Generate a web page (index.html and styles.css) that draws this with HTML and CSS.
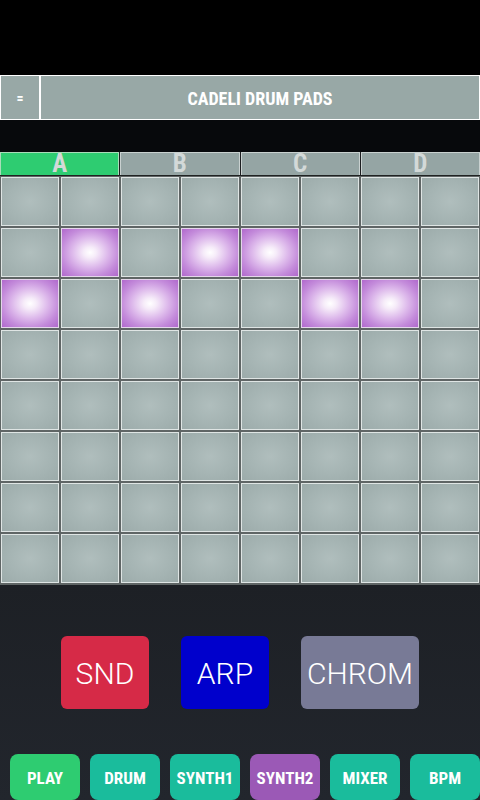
FILE: index.html
```html
<!DOCTYPE html>
<html>
<head>
<meta charset="utf-8">
<link rel="stylesheet" href="styles.css">
</head>
<body>
<div class="app">
  <div class="status"></div>
  <div class="header">
    <div class="menu">=</div>
    <div class="title">CADELI DRUM PADS</div>
  </div>
  <div class="spacer"></div>
  <div class="tabs">
    <div class="tab active">A</div>
    <div class="tab">B</div>
    <div class="tab">C</div>
    <div class="tab">D</div>
  </div>
  <div class="grid">
    <div class="pad"></div><div class="pad"></div><div class="pad"></div><div class="pad"></div><div class="pad"></div><div class="pad"></div><div class="pad"></div><div class="pad"></div>
    <div class="pad"></div><div class="pad on"></div><div class="pad"></div><div class="pad on"></div><div class="pad on"></div><div class="pad"></div><div class="pad"></div><div class="pad"></div>
    <div class="pad on"></div><div class="pad"></div><div class="pad on"></div><div class="pad"></div><div class="pad"></div><div class="pad on"></div><div class="pad on"></div><div class="pad"></div>
    <div class="pad"></div><div class="pad"></div><div class="pad"></div><div class="pad"></div><div class="pad"></div><div class="pad"></div><div class="pad"></div><div class="pad"></div>
    <div class="pad"></div><div class="pad"></div><div class="pad"></div><div class="pad"></div><div class="pad"></div><div class="pad"></div><div class="pad"></div><div class="pad"></div>
    <div class="pad"></div><div class="pad"></div><div class="pad"></div><div class="pad"></div><div class="pad"></div><div class="pad"></div><div class="pad"></div><div class="pad"></div>
    <div class="pad"></div><div class="pad"></div><div class="pad"></div><div class="pad"></div><div class="pad"></div><div class="pad"></div><div class="pad"></div><div class="pad"></div>
    <div class="pad"></div><div class="pad"></div><div class="pad"></div><div class="pad"></div><div class="pad"></div><div class="pad"></div><div class="pad"></div><div class="pad"></div>
  </div>
  <div class="lower">
    <div class="modes">
      <div class="mode snd">SND</div>
      <div class="mode arp">ARP</div>
      <div class="mode chrom">CHROM</div>
    </div>
    <div class="nav">
      <div class="nbtn play">PLAY</div>
      <div class="nbtn teal">DRUM</div>
      <div class="nbtn teal">SYNTH1</div>
      <div class="nbtn purple">SYNTH2</div>
      <div class="nbtn teal">MIXER</div>
      <div class="nbtn teal">BPM</div>
    </div>
  </div>
</div>
</body>
</html>
```

FILE: styles.css
```css
html, body {
  margin: 0;
  padding: 0;
  width: 480px;
  height: 800px;
  overflow: hidden;
  background: #000;
}
.app {
  width: 480px;
  height: 800px;
  display: flex;
  flex-direction: column;
  font-family: "Roboto Condensed", Roboto, "Liberation Sans", sans-serif;
}
.status {
  height: 75px;
  background: #000;
  flex: none;
}
.header {
  height: 45px;
  flex: none;
  display: flex;
  background: #98a8a6;
}
.menu {
  width: 38px;
  border: 1px solid #fff;
  display: flex;
  align-items: center;
  justify-content: center;
  color: #fff;
  font-weight: 700;
  font-size: 14px;
  font-stretch: condensed;
}
.title {
  flex: 1;
  border: 1px solid #fff;
  display: flex;
  align-items: center;
  justify-content: center;
  color: #fff;
  font-weight: 700;
  font-size: 18px;
  font-stretch: condensed;
  padding-top: 1px;
}
.spacer {
  height: 32px;
  flex: none;
  background: #07090c;
}
.tabs {
  height: 23px;
  flex: none;
  display: grid;
  grid-template-columns: repeat(4, 1fr);
  gap: 1px;
  background: #1c1e20;
}
.tab {
  border: 1px solid #c9d1d0;
  background: #95a5a4;
  color: #d3d9d8;
  font-weight: 700;
  font-size: 25px;
  font-stretch: condensed;
  line-height: 22px;
  text-align: center;
}
.tab.active {
  background: #2ecc71;
  border-color: #a9dcb9;
}
.grid {
  flex: none;
  border-top: 1px solid #202222;
  padding: 1px 1px 2px 1px;
  background: #5f6565;
  display: grid;
  grid-template-columns: repeat(8, 58px);
  grid-template-rows: repeat(8, 49px);
  gap: 2px;
}
.pad {
  box-sizing: border-box;
  border: 1px solid #dfe5e4;
  background: radial-gradient(ellipse at center, #b0bebd 0%, #a5b4b3 55%, #9cabaa 100%);
}
.pad.on {
  border-color: #e4d6ea;
  background: radial-gradient(ellipse at center, #ffffff 0%, #f6ecf9 16%, #ddb9eb 45%, #c48cdb 72%, #b068cc 100%);
}
.lower {
  flex: 1;
  background: linear-gradient(#1d2025, #22262d);
  display: flex;
  flex-direction: column;
}
.modes {
  margin-top: 51px;
  display: flex;
  justify-content: center;
  gap: 32px;
}
.mode {
  height: 73px;
  border-radius: 6px;
  display: flex;
  align-items: center;
  justify-content: center;
  color: #fff;
  font-family: Roboto, "Liberation Sans", sans-serif;
  font-weight: 300;
  font-size: 30px;
  padding-top: 1px;
  box-sizing: border-box;
}
.snd { width: 88px; background: #d62a47; }
.arp { width: 88px; background: #0000cc; }
.chrom { width: 118px; background: #787a96; }
.nav {
  margin-top: 45px;
  padding-left: 10px;
  display: flex;
  gap: 10px;
}
.nbtn {
  width: 70px;
  height: 46px;
  border-radius: 8px;
  display: flex;
  align-items: center;
  justify-content: center;
  color: #fff;
  font-weight: 700;
  font-size: 17px;
  font-stretch: condensed;
  padding-top: 1px;
  box-sizing: border-box;
}
.play { background: #2ecc71; }
.teal { background: #1abc9c; }
.purple { background: #9b59b6; }
```
